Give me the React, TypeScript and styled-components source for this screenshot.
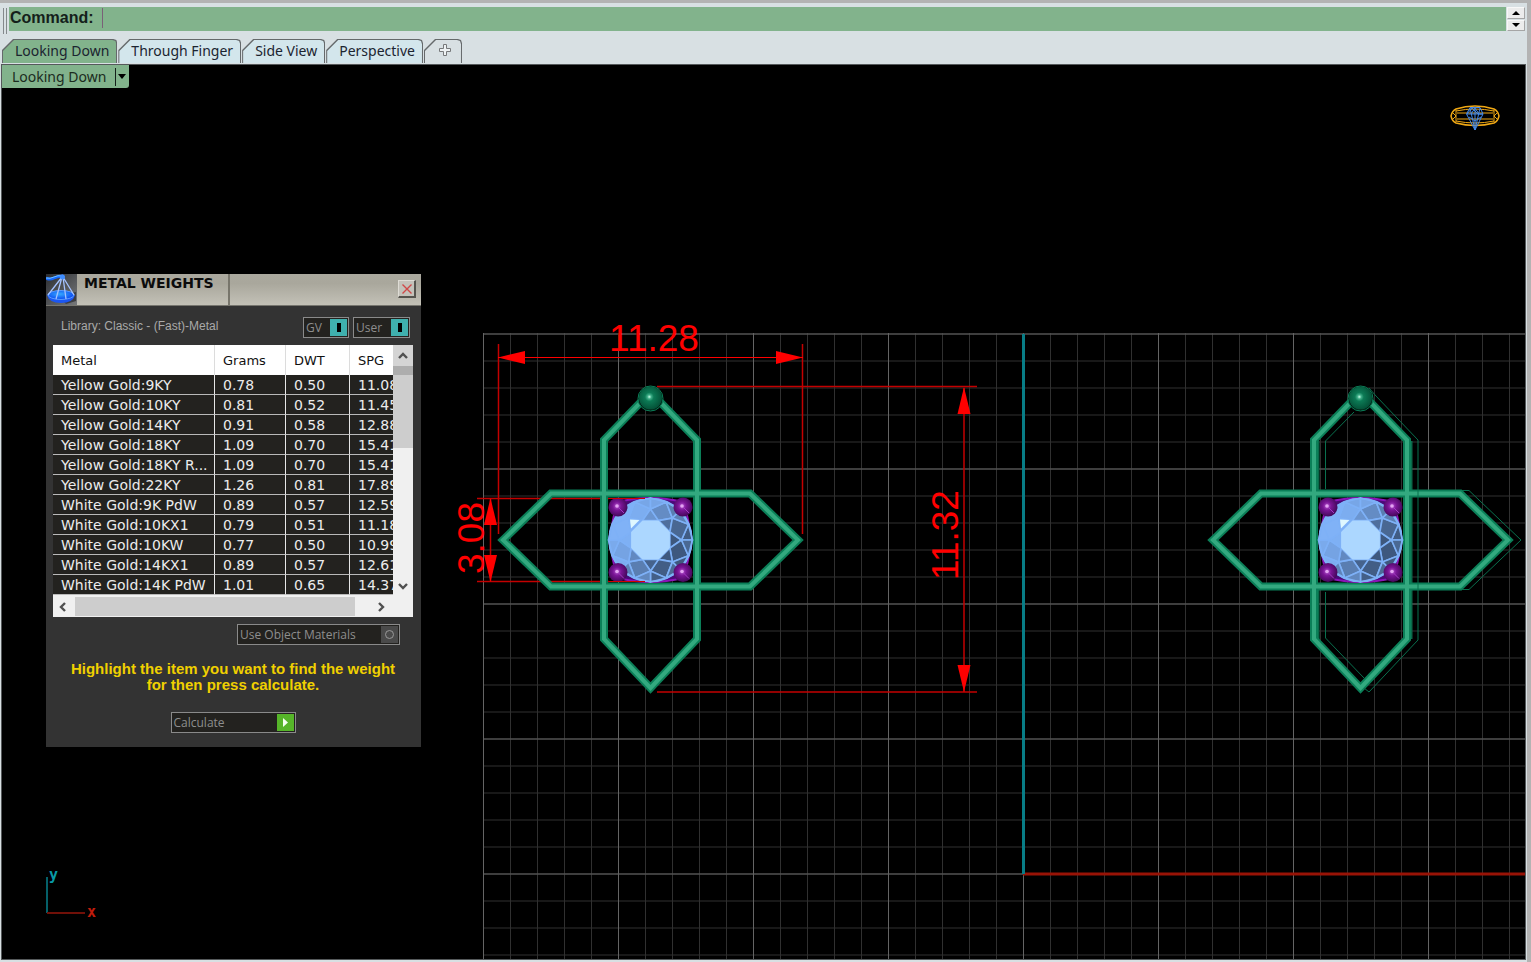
import React from "react";
import styled, { createGlobalStyle } from "styled-components";

const uiFont = `"Noto Sans", "Open Sans", sans-serif`;
const tableFont = `"DejaVu Sans", sans-serif`;
const arialFont = `"Liberation Sans", Arial, sans-serif`;

const GlobalStyle = createGlobalStyle`
  *, *::before, *::after { box-sizing: border-box; }
  body { margin: 0; background: #d8e0e3; }
  button { padding: 0; border: 0; background: none; color: inherit; }
`;

const Shell = styled.main`
  display: flex;
  flex-direction: column;
  min-height: 100vh;
  padding-bottom: 2px;
  border-top: 3px solid #b3b3b3;
  border-right: 4px solid #b3b3b3;
  background: #d8e0e3;
`;

const CommandBar = styled.div`
  display: flex;
  align-items: stretch;
  height: 32px;
  padding: 4px 2px 4px 3px;
`;

const Grip = styled.span`
  width: 4px;
  height: 26px;
  margin-top: 1px;
  margin-right: 2px;
  border-left: 1px solid #84898c;
  border-right: 1px solid #84898c;
`;

const CommandField = styled.div`
  flex: 1;
  display: flex;
  align-items: center;
  padding-bottom: 2px;
  background: #82b38c;
  font: 700 16px/20px ${arialFont};
  color: #14201a;
`;

const CommandLabel = styled.label`
  padding-left: 1px;
`;

const CommandInput = styled.input`
  flex: 1;
  height: 20px;
  margin: 0 0 0 8px;
  padding: 0 2px;
  border: 0;
  border-left: 1px solid #7a6078;
  outline: none;
  background: transparent;
  font: 16px/20px ${arialFont};
`;

const Spinner = styled.div`
  display: flex;
  flex-direction: column;
  gap: 1px;
  width: 18px;
  margin-left: 1px;
`;

const SpinButton = styled.button`
  flex: 1;
  display: flex;
  align-items: center;
  justify-content: center;
  border: 1px solid #f8f8f8;
  border-right-color: #a5a5a5;
  border-bottom-color: #a5a5a5;
  background: #ececec;
`;

const TabStrip = styled.nav`
  display: flex;
  align-items: flex-end;
  height: 29px;
  padding: 0 0 1px 2px;
`;

const TAB_OUTER = "polygon(0 11px, 11px 0, calc(100% - 4px) 0, calc(100% - 1px) 1px, 100% 4px, 100% 100%, 0 100%)";

const Tab = styled.button<{ $active?: boolean; $bare?: boolean }>`
  position: relative;
  isolation: isolate;
  height: 24px;
  margin-right: 1px;
  padding: 0 ${(p) => (p.$bare ? 11 : 8)}px 0 ${(p) => (p.$bare ? 15 : 13)}px;
  font: 14px/20px ${uiFont};
  color: #1b2430;
  &::before {
    content: "";
    position: absolute;
    inset: 0;
    z-index: -2;
    background: #65696b;
    clip-path: ${TAB_OUTER};
  }
  &::after {
    content: "";
    position: absolute;
    inset: 1px 1px 0 1px;
    z-index: -1;
    background: ${(p) => (p.$active ? "#82b38c" : p.$bare ? "#d8e0e3" : "#d3e6ec")};
    clip-path: ${TAB_OUTER};
  }
`;

const Viewport = styled.section`
  position: relative;
  flex: 1;
  min-height: 720px;
  margin: 0 1px 0 1px;
  border: 1px solid #55595b;
  background: #000;
  overflow: hidden;
`;

const Drawing = styled.svg`
  position: absolute;
  inset: 0;
  width: 100%;
  height: 100%;
`;

const ViewTitle = styled.button`
  position: absolute;
  top: 0;
  left: 0;
  display: flex;
  align-items: center;
  height: 23px;
  padding: 0 3px 0 10px;
  background: #82b38c;
  border-bottom-right-radius: 3px;
  font: 14px/20px ${uiFont};
  color: #1b2b20;
`;

const ViewTitleArrow = styled.span`
  display: flex;
  align-items: center;
  height: 18px;
  margin-left: 9px;
  padding-left: 2px;
  border-left: 1px solid #14201a;
`;

const Dialog = styled.section`
  position: absolute;
  left: 44px;
  top: 209px;
  width: 375px;
  background: #333;
`;

const TitleBar = styled.header`
  display: flex;
  height: 32px;
  border-bottom: 1px solid #77766f;
  background: linear-gradient(#aaa89e, #a9a79c 30%, #c3c1b7);
`;

const Title = styled.h1`
  width: 153px;
  margin: 0;
  padding-left: 7px;
  border-right: 2px solid #77756b;
  font: 700 14px/18px ${tableFont};
  color: #0c0c0c;
`;

const CloseButton = styled.button`
  display: flex;
  align-items: center;
  justify-content: center;
  width: 18px;
  height: 18px;
  margin: 6px 5px 0 auto;
  border: 1px solid #dedcd5;
  border-right: 2px solid #55544e;
  border-bottom: 2px solid #55544e;
  background: #c4c2ba;
`;

const DialogBody = styled.div`
  display: flex;
  flex-direction: column;
  align-items: center;
  padding: 11px 8px 14px 7px;
`;

const LibraryRow = styled.div`
  align-self: stretch;
  display: flex;
  gap: 4px;
  height: 21px;
  margin-bottom: 7px;
  padding: 0 3px 0 8px;
`;

const LibraryName = styled.span`
  flex: 1;
  font: 12px/18px ${arialFont};
  color: #a9a9a9;
  white-space: nowrap;
`;

const Plate = styled.button<{ $width: number }>`
  display: flex;
  align-items: center;
  justify-content: space-between;
  width: ${(p) => p.$width}px;
  height: 21px;
  padding: 0 1px 0 2px;
  border: 1px solid #8a8a8a;
  background: #23221f;
  font: 12px/18px "Open Sans", sans-serif;
  color: #8e8e8e;
  white-space: nowrap;
`;

const PlateMark = styled.span<{ $color: string }>`
  display: flex;
  align-items: center;
  justify-content: center;
  width: 17px;
  height: 17px;
  background: ${(p) => p.$color};
`;

const ListBox = styled.div`
  display: grid;
  grid-template-columns: 1fr 20px;
  grid-template-rows: 251px 21px;
  align-self: stretch;
  margin-bottom: 7px;
  background: #f0f0f0;
`;

const ListClip = styled.div`
  overflow: hidden;
  background: #f0f0f0;
`;

const MetalTable = styled.table`
  width: 367px;
  border-collapse: separate;
  border-spacing: 0;
  table-layout: fixed;
`;

const HeadCell = styled.th`
  height: 30px;
  padding: 2px 0 0 8px;
  border-right: 1px solid #dcdcdc;
  background: #fff;
  color: #111;
  font: 13px/18px ${tableFont};
  text-align: left;
`;

const Cell = styled.td`
  height: 20px;
  padding: 2px 0 0 8px;
  border-right: 1px solid #e6e6e6;
  border-bottom: 1px solid #b9b9b9;
  background: #23221f;
  color: #ececec;
  font: 14px/17px ${tableFont};
  white-space: nowrap;
`;

const VerticalScroll = styled.div`
  display: flex;
  flex-direction: column;
  background: #f0f0f0;
`;

const ScrollButton = styled.button<{ $bg?: string }>`
  display: flex;
  align-items: center;
  justify-content: center;
  width: 20px;
  height: 21px;
  background: ${(p) => p.$bg ?? "transparent"};
`;

const VerticalThumb = styled.div`
  height: 82px;
  border-top: 9px solid #adadad;
  background: #cdcdcd;
`;

const Spacer = styled.span`
  flex: 1;
`;

const HorizontalScroll = styled.div`
  display: flex;
`;

const HorizontalThumb = styled.div`
  width: 280px;
  margin: 1px 16px 1px 2px;
  background: #cdcdcd;
`;

const MaterialsRow = styled.div`
  align-self: stretch;
  display: flex;
  justify-content: flex-end;
  padding-right: 13px;
  margin-bottom: 16px;
`;

const Hint = styled.p`
  margin: 0 0 19px;
  font: 700 15px/16px ${arialFont};
  color: #f0d000;
  text-align: center;
  white-space: nowrap;
`;

const metals = [
  ["Yellow Gold:9KY", "0.78", "0.50", "11.08"],
  ["Yellow Gold:10KY", "0.81", "0.52", "11.45"],
  ["Yellow Gold:14KY", "0.91", "0.58", "12.88"],
  ["Yellow Gold:18KY", "1.09", "0.70", "15.41"],
  ["Yellow Gold:18KY R...", "1.09", "0.70", "15.41"],
  ["Yellow Gold:22KY", "1.26", "0.81", "17.89"],
  ["White Gold:9K PdW", "0.89", "0.57", "12.59"],
  ["White Gold:10KX1", "0.79", "0.51", "11.18"],
  ["White Gold:10KW", "0.77", "0.50", "10.99"],
  ["White Gold:14KX1", "0.89", "0.57", "12.61"],
  ["White Gold:14K PdW", "1.01", "0.65", "14.37"],
];

const RED = "#f00";

function Chevron({ turn }: { turn: number }) {
  return (
    <svg width="12" height="12" viewBox="0 0 12 12">
      <path d="M2 8 L6 4 L10 8" fill="none" stroke="#505050" strokeWidth="2.400" transform={`rotate(${turn} 6 6)`} />
    </svg>
  );
}

function ScaleIcon() {
  return (
    <svg width="31" height="31" viewBox="0 0 31 31">
      <defs>
        <linearGradient id="scaleBg" x1="0" y1="0" x2="1" y2="1">
          <stop offset="0" stopColor="#2b2d31" />
          <stop offset="1" stopColor="#77797b" />
        </linearGradient>
        <radialGradient id="pan" cx=".45" cy=".4" r=".6">
          <stop offset="0" stopColor="#35a8ff" />
          <stop offset="1" stopColor="#0a48f0" />
        </radialGradient>
      </defs>
      <rect width="31" height="31" fill="url(#scaleBg)" />
      <path d="M12 22 L30 18 L30 27 L20 30 Z" fill="#3c3d42" />
      <path d="M0 4 Q4 6 8 4 T17 2" fill="none" stroke="#1668ff" strokeWidth="3" />
      <path d="M0 4 Q4 5 8 3 T16 2" fill="none" stroke="#6fc4ff" />
      <path d="M1 21 Q15 15 29 21 Q27 29 15 29 Q3 29 1 21" fill="#1b56f2" />
      <ellipse cx="15" cy="21" rx="13" ry="4.500" fill="url(#pan)" stroke="#5a9bff" />
      <path d="M16 3 L2 21 M16 3 L10 25 M17 3 L20 25 M17 3 L28 21" fill="none" stroke="#a5c2ff" strokeWidth="1.300" />
      <circle cx="16.500" cy="3" r="2.500" fill="#3f8dff" />
    </svg>
  );
}

function point(cx: number, cy: number, r: number, deg: number) {
  const a = (deg * Math.PI) / 180;
  return `${(cx + r * Math.cos(a)).toFixed(1)},${(cy + r * Math.sin(a)).toFixed(1)}`;
}

function shade(deg: number, bias: number) {
  const t = (Math.cos(((deg - 30) * Math.PI) / 180) + 1) / 2;
  const k = Math.min(1, Math.max(0, t * 1.1 - 0.05 + (t > 0.2 ? bias : 0)));
  const mix = (a: number, b: number) => Math.round(a + (b - a) * k);
  return `rgb(${mix(128, 62)},${mix(178, 88)},${mix(247, 126)})`;
}

function Gem() {
  const cx = 650.5;
  const cy = 540;
  const line = "#7eb1f7";
  const steps = [0, 1, 2, 3, 4, 5, 6, 7];
  const table = steps.map((i) => point(cx, cy, 21, 22.5 + i * 45)).join(" ");
  return (
    <g>
      <path d="M618 500 H683 Q690 500 690 507 V572 Q690 579 683 579 H618 Q611 579 611 572 V507 Q611 500 618 500Z" fill="#000" />
      <path
        d="M618 502 Q650 494 683 502 Q697 540 683 578 Q650 586 618 578 Q604 540 618 502Z"
        fill="#4b0a78"
        stroke="#8b14b8"
        strokeWidth="2"
      />
      <circle cx={cx} cy={cy} r="42" fill={line} />
      {steps.map((i) => {
        const d = i * 45;
        const tip = point(cx, cy, 31, d);
        const v1 = point(cx, cy, 21, d - 22.5);
        const v2 = point(cx, cy, 21, d + 22.5);
        const g1 = point(cx, cy, 41, d - 22.5);
        const g2 = point(cx, cy, 41, d + 22.5);
        const mid = point(cx, cy, 42, d);
        const nextTip = point(cx, cy, 31, d + 45);
        return (
          <g key={i} stroke={line} strokeWidth="1.600" strokeLinejoin="round">
            <polygon points={`${v1} ${tip} ${v2}`} fill={shade(d, 0.1)} />
            <polygon points={`${v2} ${tip} ${g2} ${nextTip}`} fill={shade(d + 22, 0)} />
            <polygon points={`${tip} ${g1} ${mid}`} fill={shade(d - 12, 0.05)} />
            <polygon points={`${tip} ${mid} ${g2}`} fill={shade(d + 12, -0.2)} />
          </g>
        );
      })}
      <circle cx={cx} cy={cy} r="41.500" fill="none" stroke={line} strokeWidth="1.500" />
      <polygon points={table} fill="#acd7ff" />
      <polygon points="630,519.500 639.500,520 631,528.500" fill="#dff8ff" />
      {[618, 683].map((x) =>
        [507, 572.5].map((y) => (
          <g key={`${x}-${y}`}>
            <circle cx={x} cy={y} r="9.500" fill="url(#prong)" />
            <path d={`M${x} ${y} l6 6`} stroke="#a43bc4" strokeWidth="1" />
            <circle cx={x - 1} cy={y - 1} r="1.800" fill="#e3a4f2" />
          </g>
        )),
      )}
    </g>
  );
}

const uprightPath = "M650.5 392 L697 440 V639 L650.5 688 L604 639 V440 Z";
const crossPath = "M503 540 L551 493.5 H750 L798 540 L750 586.5 H551 Z";

function Pendant() {
  return (
    <g>
      <g fill="none" strokeLinejoin="miter">
        <path d={uprightPath} stroke="#0b7f58" strokeWidth="8" />
        <path d={crossPath} stroke="#0b7f58" strokeWidth="8" />
        <path d={uprightPath} stroke="#33a97f" strokeWidth="4" />
        <path d={crossPath} stroke="#33a97f" strokeWidth="4" />
      </g>
      <circle cx="650.500" cy="398.500" r="12.500" fill="#001a10" stroke="#0b7f58" />
      <circle cx="650.500" cy="398" r="11.500" fill="url(#ball)" />
      <Gem />
    </g>
  );
}

function Arrow({ x, y, turn }: { x: number; y: number; turn: number }) {
  return <path d="M0 0 L-6.500 27 H6.500 Z" fill={RED} transform={`translate(${x} ${y}) rotate(${turn})`} />;
}

function Scene() {
  return (
    <Drawing role="img" aria-label="Pendant, looking down">
      <defs>
        <radialGradient id="ball" cx=".45" cy=".45" r=".55">
          <stop offset="0" stopColor="#c8ffe8" />
          <stop offset=".16" stopColor="#3fae88" />
          <stop offset=".35" stopColor="#0c7a55" />
          <stop offset="1" stopColor="#045238" />
        </radialGradient>
        <radialGradient id="prong" cx=".45" cy=".45" r=".55">
          <stop offset="0" stopColor="#b455cf" />
          <stop offset=".4" stopColor="#7a1596" />
          <stop offset="1" stopColor="#45085c" />
        </radialGradient>
        <pattern id="minor" x="483" y="333.500" width="27" height="27" patternUnits="userSpaceOnUse">
          <path d="M.5 0 V27 M0 .5 H27" stroke="#303030" />
        </pattern>
        <pattern id="major" x="483" y="333.500" width="135" height="135" patternUnits="userSpaceOnUse">
          <path d="M.5 0 V135 M0 .5 H135" stroke="#646464" />
        </pattern>
      </defs>
      <g transform="translate(-2 -65)">
        <rect x="483" y="333" width="100%" height="100%" fill="url(#minor)" />
        <rect x="483" y="333" width="100%" height="100%" fill="url(#major)" />
        <rect x="1023" y="872.500" width="100%" height="3" fill="#981306" />
        <rect x="1022" y="334" width="3" height="540" fill="#087d86" />

        <g fill="none" stroke="#c40000" strokeWidth="1.500">
          <path d="M498.500 344 V534 M802.500 344 V534" />
          <path d="M657 386.500 H977 M657 692 H977" />
          <path d="M964 388 V692" />
          <path d="M477 498.500 H609 M477 581.500 H609 M490.500 499 V581" />
        </g>
        <path d="M498 357.500 H803" stroke={RED} />
        <Arrow x={498} y={357.5} turn={-90} />
        <Arrow x={803} y={357.5} turn={90} />
        <Arrow x={964} y={387} turn={0} />
        <Arrow x={964} y={692} turn={180} />
        <g fill={RED} fontFamily="Liberation Sans, Arial, sans-serif" fontSize="37" textAnchor="middle">
          <text x="654" y="351">11.28</text>
          <text transform="translate(958 535) rotate(-90)">11.32</text>
          <text transform="translate(484 538) rotate(-90)">3.08</text>
        </g>

        <Pendant />
        <path d="M609 498.500 H645 M609 581.500 H645" stroke="#d00000" />
        <Arrow x={490.5} y={498} turn={0} />
        <Arrow x={490.5} y={582} turn={180} />

        <path d="M1316 441 V490 M1409 441 V639 M1316 590 V639" fill="none" stroke="#0a6a4a" strokeWidth="7" />
        <g transform="translate(710 0)">
          <Pendant />
        </g>
        <g fill="none" stroke="#09704e">
          <path d="M1325.500 489 V441 L1354 412 M1369 388 L1376 396 L1418 440 V640 L1369 692 L1364 688" />
          <path d="M1325.500 592 V638 L1364 678 M1462 490.500 H1469 L1521 540 L1469 589.500 H1462" />
        </g>

        <g fill="none" stroke="#f0a814" strokeWidth="1.500">
          <path d="M1456 109 Q1475 103 1494 109 Q1498 111 1499 116 Q1498 121 1494 123 Q1475 128 1456 123 Q1452 121 1451 116 Q1452 111 1456 109Z" />
          <path d="M1456 111 Q1475 107 1494 111 M1456 121 Q1475 125 1494 121 M1456 110 V122 M1494 110 V122 M1453 113 L1456 116 L1453 119 M1497 113 L1494 116 L1497 119 M1457 113 H1493 M1457 119 H1493" strokeWidth="1" />
        </g>
        <g fill="none" stroke="#4388e8" strokeWidth="1">
          <path d="M1470 107.500 H1480 L1483 114 L1475 130 L1466.500 114 Z M1467 114 H1483 M1470 108 L1475 130 L1480 108 M1467 114 L1472 108 L1478 114 L1483 114 M1471 114 L1475 108 L1479 114 M1475 108 V130 M1469 117 L1475 121 L1481 117" />
        </g>

        <rect x="46" y="877" width="2" height="36" fill="#056069" />
        <rect x="47" y="912" width="38" height="2" fill="#701008" />
        <g fontFamily="DejaVu Sans Mono, monospace" fontWeight="700" fontSize="15">
          <text x="49" y="880" fill="#089aa6">y</text>
          <text x="87" y="917" fill="#c01c0c">x</text>
        </g>
      </g>
    </Drawing>
  );
}

function MetalWeights() {
  return (
    <Dialog role="dialog" aria-labelledby="metal-weights-title">
      <TitleBar>
        <ScaleIcon />
        <Title id="metal-weights-title">METAL WEIGHTS</Title>
        <CloseButton aria-label="Close">
          <svg width="12" height="12" viewBox="0 0 12 12">
            <path d="M1.500 1.500 L10.500 10.500 M10.500 1.500 L1.500 10.500" stroke="#d04848" strokeWidth="1.400" />
          </svg>
        </CloseButton>
      </TitleBar>
      <DialogBody>
        <LibraryRow>
          <LibraryName>Library: Classic - (Fast)-Metal</LibraryName>
          <Plate $width={46} aria-pressed="true">
            GV
            <PlateMark $color="#3fb0ae">
              <svg width="4" height="9"><rect width="4" height="9" fill="#000" /></svg>
            </PlateMark>
          </Plate>
          <Plate $width={57} aria-pressed="true">
            User
            <PlateMark $color="#3fb0ae">
              <svg width="4" height="9"><rect width="4" height="9" fill="#000" /></svg>
            </PlateMark>
          </Plate>
        </LibraryRow>
        <ListBox>
          <ListClip>
            <MetalTable>
              <colgroup>
                <col width="162" />
                <col width="71" />
                <col width="64" />
                <col width="70" />
              </colgroup>
              <thead>
                <tr>
                  {["Metal", "Grams", "DWT", "SPG"].map((h) => (
                    <HeadCell key={h} scope="col">{h}</HeadCell>
                  ))}
                </tr>
              </thead>
              <tbody>
                {metals.map((row) => (
                  <tr key={row[0]}>
                    {row.map((value, i) => (
                      <Cell key={i}>{value}</Cell>
                    ))}
                  </tr>
                ))}
              </tbody>
            </MetalTable>
          </ListClip>
          <VerticalScroll>
            <ScrollButton $bg="#d4d4d4" aria-label="Scroll up"><Chevron turn={0} /></ScrollButton>
            <VerticalThumb />
            <Spacer />
            <ScrollButton aria-label="Scroll down"><Chevron turn={180} /></ScrollButton>
          </VerticalScroll>
          <HorizontalScroll>
            <ScrollButton aria-label="Scroll left"><Chevron turn={-90} /></ScrollButton>
            <HorizontalThumb />
            <ScrollButton aria-label="Scroll right"><Chevron turn={90} /></ScrollButton>
          </HorizontalScroll>
        </ListBox>
        <MaterialsRow>
          <Plate $width={163} aria-pressed="false">
            Use Object Materials
            <PlateMark $color="#4a4a4a">
              <svg width="11" height="11" viewBox="0 0 11 11">
                <circle cx="5.500" cy="5.500" r="4" fill="none" stroke="#999" />
              </svg>
            </PlateMark>
          </Plate>
        </MaterialsRow>
        <Hint>
          Highlight the item you want to find the weight
          <br />
          for then press calculate.
        </Hint>
        <Plate $width={125}>
          Calculate
          <PlateMark $color="#56b529">
            <svg width="7" height="9" viewBox="0 0 7 9">
              <path d="M1 0 L6 4.500 L1 9Z" fill="#f4fff0" />
            </svg>
          </PlateMark>
        </Plate>
      </DialogBody>
    </Dialog>
  );
}

export default function App() {
  return (
    <>
      <GlobalStyle />
      <Shell>
        <CommandBar>
          <Grip />
          <CommandField>
            <CommandLabel htmlFor="command">Command:</CommandLabel>
            <CommandInput id="command" />
          </CommandField>
          <Spinner>
            <SpinButton aria-label="Previous command">
              <svg width="8" height="4"><path d="M0 4 L4 0 L8 4Z" /></svg>
            </SpinButton>
            <SpinButton aria-label="Next command">
              <svg width="8" height="4"><path d="M0 0 L4 4 L8 0Z" /></svg>
            </SpinButton>
          </Spinner>
        </CommandBar>
        <TabStrip>
          <Tab $active>Looking Down</Tab>
          <Tab>Through Finger</Tab>
          <Tab>Side View</Tab>
          <Tab>Perspective</Tab>
          <Tab $bare aria-label="New viewport">
            <svg width="12" height="12" viewBox="0 0 12 12">
              <path d="M4.500 .5 H7.500 V4.500 H11.500 V7.500 H7.500 V11.500 H4.500 V7.500 H.5 V4.500 H4.500Z" fill="#eef2f3" stroke="#77797b" />
            </svg>
          </Tab>
        </TabStrip>
        <Viewport>
          <Scene />
          <ViewTitle>
            Looking Down
            <ViewTitleArrow>
              <svg width="8" height="5"><path d="M0 0 H8 L4 5Z" /></svg>
            </ViewTitleArrow>
          </ViewTitle>
          <MetalWeights />
        </Viewport>
      </Shell>
    </>
  );
}
